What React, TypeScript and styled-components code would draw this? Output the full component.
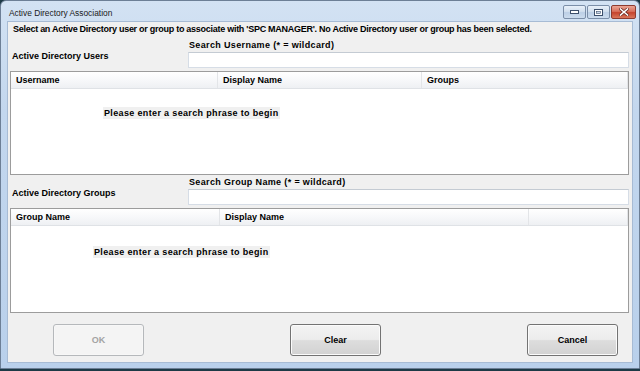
import React from "react";
import styled, { createGlobalStyle } from "styled-components";

const GlobalStyle = createGlobalStyle`
  html, body {
    margin: 0;
    padding: 0;
    background: #1d3a46;
    width: 640px;
    height: 371px;
    overflow: hidden;
  }
  * { box-sizing: border-box; }
`;

const Window = styled.div`
  width: 640px;
  height: 369px;
  display: flex;
  flex-direction: column;
  border: 1px solid #6d7f96;
  border-radius: 6px 6px 0 0;
  background: linear-gradient(180deg, #d3e2f3 0%, #c3d7ee 30%, #b9d0eb 100%);
  font-family: "Liberation Sans", Arial, sans-serif;
  color: #000;
`;

const TitleBar = styled.div`
  height: 20px;
  display: flex;
  align-items: flex-start;
  justify-content: space-between;
  padding: 0 3px 0 8px;
`;

const Title = styled.div`
  font-size: 8.4px;
  line-height: 9px;
  margin-top: 8px;
  color: #1a1a1a;
`;

const CaptionGroup = styled.div`
  display: flex;
  gap: 1px;
  margin-top: 4px;
`;

const CaptionButton = styled.div<{ $close?: boolean }>`
  width: ${(p) => (p.$close ? 25 : 23)}px;
  height: 14px;
  display: flex;
  align-items: center;
  justify-content: center;
  border-radius: 2px;
  border: 1px solid ${(p) => (p.$close ? "#8d3b30" : "#7b8ea8")};
  background: ${(p) =>
    p.$close
      ? "linear-gradient(180deg, #eaa595 0%, #d8705c 45%, #c5442e 55%, #d9765b 100%)"
      : "linear-gradient(180deg, #e8f0f9 0%, #d2dfee 45%, #bccfe6 55%, #ccdcee 100%)"};
`;

const Client = styled.div`
  flex: 1;
  margin: 0 6px 5px 6px;
  background: #f0f0f0;
  border: 1px solid #a7bbd4;
  display: flex;
  flex-direction: column;
  padding: 0 3px 0 2px;
`;

const Instruction = styled.div`
  font-size: 9px;
  font-weight: bold;
  line-height: 11px;
  letter-spacing: -0.27px;
  margin: 2px 0 0 3px;
  white-space: nowrap;
`;

const SearchGrid = styled.div<{ $top: number }>`
  display: grid;
  grid-template-columns: 178px 1fr;
  margin-top: ${(p) => p.$top}px;
  align-items: center;
`;

const SectionLabel = styled.div`
  font-size: 9px;
  font-weight: bold;
  padding-left: 2px;
  padding-top: 3px;
`;

const SearchField = styled.div`
  display: flex;
  flex-direction: column;
`;

const SearchLabel = styled.div`
  font-size: 9px;
  font-weight: bold;
  line-height: 10px;
  letter-spacing: 0.35px;
  padding-left: 1px;
  margin-bottom: 2px;
`;

const SearchInput = styled.div`
  height: 16px;
  background: #fff;
  border: 1px solid #d6dde6;
  border-top-color: #c4cbd3;
`;

const ListBox = styled.div<{ $height: number }>`
  margin-top: 3px;
  height: ${(p) => p.$height}px;
  background: #fff;
  border: 1px solid #9c9c9c;
  display: flex;
  flex-direction: column;
`;

const HeaderRow = styled.div`
  height: 17px;
  display: flex;
  background: linear-gradient(180deg, #ffffff 0%, #f7f8fa 50%, #eef0f3 100%);
  border-bottom: 1px solid #dfe2e6;
`;

const HeaderCell = styled.div<{ $width?: number }>`
  ${(p) => (p.$width ? `width: ${p.$width}px;` : "flex: 1;")}
  font-size: 9px;
  font-weight: bold;
  line-height: 17px;
  padding-left: 5px;
  border-right: 1px solid #e3e5e8;
  white-space: nowrap;
`;

const ListBody = styled.div<{ $indent: number; $top: number }>`
  flex: 1;
  padding: ${(p) => p.$top}px 0 0 ${(p) => p.$indent}px;
`;

const Placeholder = styled.span`
  display: inline-block;
  background: #f0f0f0;
  font-size: 9px;
  font-weight: bold;
  line-height: 12px;
  letter-spacing: 0.35px;
  padding: 0 1px;
`;

const ButtonBar = styled.div`
  display: flex;
  justify-content: space-between;
  padding: 0 11px 0 43px;
  margin-top: 11px;
`;

const DialogButton = styled.div<{ $disabled?: boolean }>`
  width: 91px;
  height: 32px;
  display: flex;
  align-items: center;
  justify-content: center;
  font-size: 9px;
  font-weight: bold;
  border-radius: 3px;
  border: 1px solid ${(p) => (p.$disabled ? "#b5b8bb" : "#737373")};
  color: ${(p) => (p.$disabled ? "#a3a3a3" : "#000")};
  background: ${(p) =>
    p.$disabled
      ? "#f4f4f4"
      : "linear-gradient(180deg, #f3f3f3 0%, #ececec 48%, #dddddd 52%, #d2d2d2 100%)"};
  box-shadow: inset 0 0 0 1px ${(p) => (p.$disabled ? "#f7f7f7" : "#fbfbfb")};
`;

const MinGlyph = () => (
  <svg width="9" height="4" viewBox="0 0 9 4">
    <rect x="0.5" y="0.5" width="8" height="3" fill="#fff" stroke="#3c4f6b" />
  </svg>
);

const MaxGlyph = () => (
  <svg width="9" height="7" viewBox="0 0 9 7">
    <rect x="0.5" y="0.5" width="8" height="6" fill="#fff" stroke="#3c4f6b" />
    <rect x="2.5" y="2.5" width="4" height="2" fill="#c9d8ea" stroke="#3c4f6b" strokeWidth="0.6" />
  </svg>
);

const CloseGlyph = () => (
  <svg width="10" height="8" viewBox="0 0 10 8">
    <path d="M1.5 1 L8.5 7 M8.5 1 L1.5 7" stroke="#6a2a22" strokeWidth="3" strokeLinecap="square" />
    <path d="M1.5 1 L8.5 7 M8.5 1 L1.5 7" stroke="#fff" strokeWidth="1.6" strokeLinecap="square" />
  </svg>
);

type Column = { title: string; width?: number };

const usersColumns: Column[] = [
  { title: "Username", width: 207 },
  { title: "Display Name", width: 204 },
  { title: "Groups" },
];

const groupColumns: Column[] = [
  { title: "Group Name", width: 209 },
  { title: "Display Name", width: 309 },
  { title: "" },
];

const ResultList: React.FC<{ columns: Column[]; height: number; indent: number; top: number }> = ({
  columns,
  height,
  indent,
  top,
}) => (
  <ListBox $height={height}>
    <HeaderRow>
      {columns.map((c, i) => (
        <HeaderCell key={i} $width={c.width}>
          {c.title}
        </HeaderCell>
      ))}
    </HeaderRow>
    <ListBody $indent={indent} $top={top}>
      <Placeholder>Please enter a search phrase to begin</Placeholder>
    </ListBody>
  </ListBox>
);

export default function App() {
  return (
    <>
      <GlobalStyle />
      <Window>
        <TitleBar>
          <Title>Active Directory Association</Title>
          <CaptionGroup>
            <CaptionButton>
              <MinGlyph />
            </CaptionButton>
            <CaptionButton>
              <MaxGlyph />
            </CaptionButton>
            <CaptionButton $close>
              <CloseGlyph />
            </CaptionButton>
          </CaptionGroup>
        </TitleBar>
        <Client>
          <Instruction>
            Select an Active Directory user or group to associate with 'SPC MANAGER'. No Active Directory user or group has
            been selected.
          </Instruction>
          <SearchGrid $top={5}>
            <SectionLabel>Active Directory Users</SectionLabel>
            <SearchField>
              <SearchLabel>Search Username (* = wildcard)</SearchLabel>
              <SearchInput />
            </SearchField>
          </SearchGrid>
          <ResultList columns={usersColumns} height={104} indent={92} top={13} />
          <SearchGrid $top={2}>
            <SectionLabel>Active Directory Groups</SectionLabel>
            <SearchField>
              <SearchLabel>Search Group Name (* = wildcard)</SearchLabel>
              <SearchInput />
            </SearchField>
          </SearchGrid>
          <ResultList columns={groupColumns} height={105} indent={82} top={15} />
          <ButtonBar>
            <DialogButton $disabled>OK</DialogButton>
            <DialogButton>Clear</DialogButton>
            <DialogButton>Cancel</DialogButton>
          </ButtonBar>
        </Client>
      </Window>
    </>
  );
}
